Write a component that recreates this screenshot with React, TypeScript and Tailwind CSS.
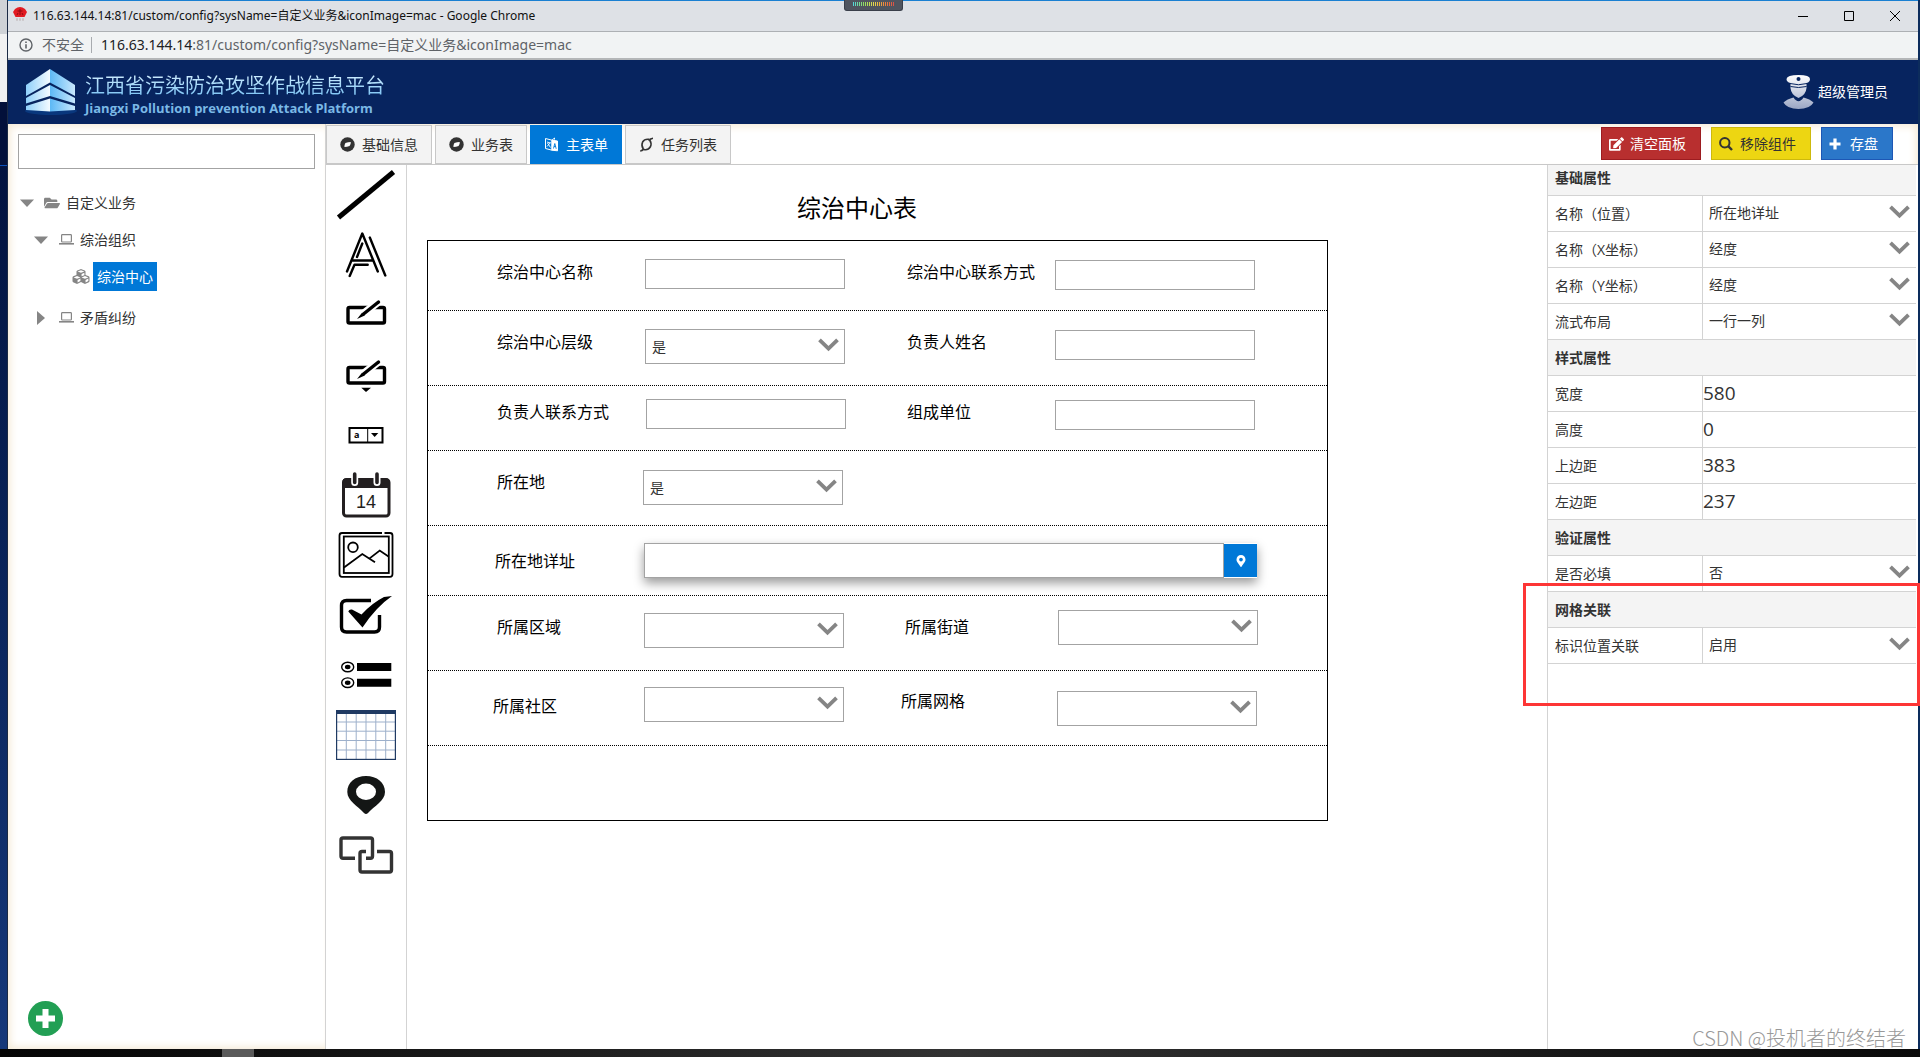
import React from 'react';
import { FaCubes, FaEdit, FaFolderOpen, FaMapMarkerAlt } from 'react-icons/fa';

type Field = {
  kind: 'input' | 'select' | 'location';
  id: string;
  label: string;
  labelX: number;
  labelY: number;
  x: number;
  y: number;
  value?: string;
};

// coordinates are relative to the design canvas
const fields: Field[] = [
  { kind: 'input', id: 'name', label: '综治中心名称', labelX: 90, labelY: 95, x: 238, y: 94 },
  { kind: 'input', id: 'contact', label: '综治中心联系方式', labelX: 500, labelY: 95, x: 648, y: 95 },
  { kind: 'select', id: 'level', label: '综治中心层级', labelX: 90, labelY: 165, x: 238, y: 164, value: '是' },
  { kind: 'input', id: 'leader', label: '负责人姓名', labelX: 500, labelY: 165, x: 648, y: 165 },
  { kind: 'input', id: 'leaderPhone', label: '负责人联系方式', labelX: 90, labelY: 235, x: 239, y: 234 },
  { kind: 'input', id: 'units', label: '组成单位', labelX: 500, labelY: 235, x: 648, y: 235 },
  { kind: 'select', id: 'place', label: '所在地', labelX: 90, labelY: 305, x: 236, y: 305, value: '是' },
  { kind: 'location', id: 'address', label: '所在地详址', labelX: 88, labelY: 384, x: 237, y: 378 },
  { kind: 'select', id: 'district', label: '所属区域', labelX: 90, labelY: 450, x: 237, y: 448, value: '' },
  { kind: 'select', id: 'street', label: '所属街道', labelX: 498, labelY: 450, x: 651, y: 445, value: '' },
  { kind: 'select', id: 'community', label: '所属社区', labelX: 86, labelY: 529, x: 237, y: 522, value: '' },
  { kind: 'select', id: 'gridArea', label: '所属网格', labelX: 494, labelY: 524, x: 650, y: 526, value: '' },
];

const sections = [
  {
    title: '基础属性',
    rows: [
      { id: 'p-name', label: '名称（位置）', value: '所在地详址', select: true },
      { id: 'p-x', label: '名称（X坐标）', value: '经度', select: true },
      { id: 'p-y', label: '名称（Y坐标）', value: '经度', select: true },
      { id: 'p-flow', label: '流式布局', value: '一行一列', select: true },
    ],
  },
  {
    title: '样式属性',
    rows: [
      { id: 'p-width', label: '宽度', value: '580', select: false },
      { id: 'p-height', label: '高度', value: '0', select: false },
      { id: 'p-top', label: '上边距', value: '383', select: false },
      { id: 'p-left', label: '左边距', value: '237', select: false },
    ],
  },
  {
    title: '验证属性',
    rows: [{ id: 'p-required', label: '是否必填', value: '否', select: true }],
  },
  {
    title: '网格关联',
    rows: [{ id: 'p-link', label: '标识位置关联', value: '启用', select: true }],
  },
];

const Chevron = () => (
  <svg className="pointer-events-none absolute right-[6px] top-[9px]" width="21" height="14" viewBox="0 0 21 14">
    <path d="M1.5 1.8 L10.5 10.6 L19.5 1.8" fill="none" stroke="#858585" strokeWidth="3.8" />
  </svg>
);

const ToolSvg = ({ children }: { children: React.ReactNode }) => (
  <svg width="60" height="60" viewBox="0 0 60 60" fill="none" stroke="#000">
    {children}
  </svg>
);

const PenBox = () => (
  <>
    <rect x="12" y="22.5" width="36.5" height="15.5" rx="1.5" strokeWidth="3.4" />
    <path d="M24 31.5 L44 15.5" stroke="#fff" strokeWidth="8" />
    <path d="M27.5 29 L42.5 17" strokeWidth="3.4" strokeLinecap="round" />
    <path d="M21 34 L26 27.8 L28.8 30.5 Z" fill="#000" stroke="none" />
  </>
);

const tools = [
  {
    name: '直线',
    icon: <ToolSvg><path d="M2.5 52.5 L57.5 7" strokeWidth="5" /></ToolSvg>,
  },
  {
    name: '文本',
    icon: (
      <ToolSvg>
        <path
          d="M11 46.5 L26.3 8.5 L41.8 46.5 M33.8 12.5 L49.3 50.5 M26.3 18.5 L21 32 M17 35.5 H37 M31.7 39.8 H18.5 L13.7 51"
          strokeWidth="2.4"
          strokeLinecap="round"
          strokeLinejoin="round"
        />
      </ToolSvg>
    ),
  },
  { name: '输入框', icon: <ToolSvg><PenBox /></ToolSvg> },
  {
    name: '下拉输入框',
    icon: (
      <ToolSvg>
        <PenBox />
        <path d="M25.3 42.7 H35 L30 47 Z" fill="#000" stroke="none" />
      </ToolSvg>
    ),
  },
  {
    name: '下拉框',
    icon: (
      <ToolSvg>
        <path d="M13.5 23 H46.5 V37.5 H13.5 Z" strokeWidth="2" />
        <path d="M31.7 23 V37.5" strokeWidth="1" />
        <path d="M35 28 H42.3 L38.7 32 Z" fill="#000" stroke="none" />
        <text x="18" y="33" fill="#000" stroke="none" fontSize="9" fontWeight="bold" fontFamily="Open Sans, sans-serif">a</text>
      </ToolSvg>
    ),
  },
  {
    name: '日期',
    icon: (
      <ToolSvg>
        <rect x="7.5" y="14.5" width="45.5" height="36.5" rx="3" stroke="#231f20" strokeWidth="3" />
        <path d="M7 22.5 V16 Q7 14 9 14 H51 Q53 14 53 16 V22.5 Z" fill="#231f20" stroke="#231f20" />
        <path d="M18.7 9 V17.5 M41 9 V17.5" stroke="#fff" strokeWidth="7" strokeLinecap="round" />
        <path d="M18.7 9 V17.5 M41 9 V17.5" stroke="#231f20" strokeWidth="3.6" strokeLinecap="round" />
        <text x="20" y="43" fill="#231f20" stroke="none" fontSize="18" fontFamily="Liberation Sans, sans-serif">14</text>
      </ToolSvg>
    ),
  },
  {
    name: '图片',
    icon: (
      <ToolSvg>
        <path d="M46 8 H6 Q3.5 8 3.5 10.5 V49 Q3.5 51.8 6 51.8 H54 Q56.5 51.8 56.5 49 V10.5 Q56.5 8 54 8 H48.5" strokeWidth="1.8" />
        <rect x="7.8" y="11.5" width="45" height="36.5" strokeWidth="1.8" />
        <circle cx="17" cy="22.3" r="4.8" strokeWidth="1.8" />
        <path d="M8 42.5 L26.3 29 L39 37.3 M33.3 33.6 L43.7 25.5 L52.5 31.5" strokeWidth="1.8" />
      </ToolSvg>
    ),
  },
  {
    name: '复选框',
    icon: (
      <ToolSvg>
        <path d="M35 15.5 H10.5 Q5.5 15.5 5.5 20.5 V42 Q5.5 47 10.5 47 H38.5 Q43.5 47 43.5 42 V30" strokeWidth="3.4" />
        <path d="M12.3 26.5 Q13 24 16 24.5 L25.5 29.5 Q36 18 48 12 L56 11 Q40 22 26.5 42.5 Z" fill="#000" stroke="none" />
      </ToolSvg>
    ),
  },
  {
    name: '单选框',
    icon: (
      <ToolSvg>
        <ellipse cx="11.7" cy="22" rx="6" ry="4.8" strokeWidth="1.4" />
        <ellipse cx="11.7" cy="37.7" rx="6" ry="4.8" strokeWidth="1.4" />
        <ellipse cx="11.7" cy="22" rx="2.8" ry="2.2" fill="#000" stroke="none" />
        <ellipse cx="11.7" cy="37.7" rx="2.8" ry="2.2" fill="#000" stroke="none" />
        <path d="M21 22 H55.3 M21 37.8 H55.3" strokeWidth="8" />
      </ToolSvg>
    ),
  },
  {
    name: '表格',
    icon: (
      <ToolSvg>
        <path d="M10.3 8 V54 M20.2 8 V54 M30 8 V54 M39.8 8 V54 M49.7 8 V54 M1 17 H59 M1 26.2 H59 M1 35.5 H59 M1 45 H59" stroke="#9db0cb" strokeWidth="1" />
        <rect x="0.6" y="5.6" width="58.8" height="48.8" stroke="#1f3a63" strokeWidth="1.2" />
        <path d="M0 7 H60" stroke="#1f3a63" strokeWidth="4" />
      </ToolSvg>
    ),
  },
  {
    name: '定位',
    icon: (
      <ToolSvg>
        <path
          d="M30 11 C41 11 49 17.5 49 27 C49 36 38 41 32 48 Q30 50 28 48 C22 41 11.3 36 11.3 27 C11.3 17.5 19 11 30 11 Z M30 18.5 A10 8.2 0 1 0 30 34.9 A10 8.2 0 1 0 30 18.5 Z"
          fill="#141615"
          fillRule="evenodd"
          stroke="none"
        />
      </ToolSvg>
    ),
  },
  {
    name: '关联',
    icon: (
      <ToolSvg>
        <path d="M19 33.3 H7 Q5 33.3 5 31.3 V15 Q5 13 7 13 H34.5 Q36.5 13 36.5 15 V31.3 Q36.5 33.3 34.5 33.3 H30" stroke="#333" strokeWidth="3.4" />
        <path d="M30 26.5 H26 Q24 26.5 24 28.5 V45 Q24 47 26 47 H53.5 Q55.5 47 55.5 45 V28.5 Q55.5 26.5 53.5 26.5 H41" stroke="#333" strokeWidth="3.4" />
      </ToolSvg>
    ),
  },
];

const CompassIcon = () => (
  <svg width="15" height="15" viewBox="0 0 15 15">
    <circle cx="7.5" cy="7.5" r="7.2" fill="#333" />
    <path d="M5.4 6 Q8 5 10.8 5 Q10.9 7.4 9.6 9 Q7 10 4.4 10 Q4.2 7.8 5.4 6 Z" fill="#fff" />
  </svg>
);

const FormIcon = () => (
  <svg width="15" height="15" viewBox="0 0 15 15" fill="none" stroke="#fff">
    <path d="M1.5 1.5 L8 3.2 V13.2 L1.5 11.5 Z M8 3.2 L10.5 1 V2.5" strokeWidth="1" />
    <path d="M8 3.2 L13.5 4 V13.8 L8 13.2 Z" fill="#fff" />
    <path d="M3 5 L6.5 6 M3 9.5 L6.5 5.5 M3.5 6 L6.5 10.5" strokeWidth="0.9" />
    <path d="M9.5 11.5 L10.8 6.5 L12.2 11.8 M10 9.5 H11.8" stroke="#0078d7" strokeWidth="0.9" />
  </svg>
);

const TaskIcon = () => (
  <svg width="15" height="15" viewBox="0 0 15 15" fill="none" stroke="#333" strokeWidth="1.6">
    <path d="M10.8 3.2 Q13 6.5 11.4 9.8 Q9 13.6 4.6 12.4 M4.2 11.8 Q2 8.4 3.6 5 Q5.6 1.6 10.4 2.4" />
    <path d="M1.2 14 Q3 14 5.2 11.6 M9.8 3.8 Q11.4 1.4 14 1.2" />
  </svg>
);

const tabs = [
  { name: '基础信息', icon: <CompassIcon /> },
  { name: '业务表', icon: <CompassIcon /> },
  { name: '主表单', icon: <FormIcon />, active: true },
  { name: '任务列表', icon: <TaskIcon /> },
];

const LaptopIcon = () => (
  <svg width="15" height="15" viewBox="0 0 15 15" fill="none" stroke="#858585">
    <rect x="2.6" y="2.6" width="9.8" height="7.4" rx="0.8" strokeWidth="1.2" />
    <path d="M0 11.8 H15" strokeWidth="1.6" />
  </svg>
);

const DownArrow = () => (
  <svg width="14" height="8" viewBox="0 0 14 8"><path d="M0 0.5 H14 L7 8 Z" fill="#858585" /></svg>
);

const RightArrow = () => (
  <svg width="14" height="14" viewBox="0 0 14 14"><path d="M3 0 L11 7 L3 14 Z" fill="#858585" /></svg>
);

const BrowserChrome = () => (
  <div className="font-['Noto_Sans','Noto_Sans_CJK_SC',sans-serif]">
    <div className="relative flex h-8 items-center border-b border-[#adb0b4] border-t border-t-[#1a80d2] bg-[#dee1e6] pl-1">
      <svg width="16" height="16" viewBox="0 0 16 16" className="mb-1">
        <path d="M3 3 Q8 -1 13 3 L15 6 L12.5 11 H3.5 L1 6 Z" fill="#e21b22" />
        <path d="M5.5 5 H10.5 M8 3 V9 M5 9 L6 7 M11 9 L10 7" stroke="#8c0d12" strokeWidth="1" />
        <path d="M4 13.5 H12" stroke="#c9c4c6" strokeWidth="2.5" strokeDasharray="2 1" />
      </svg>
      <span className="ml-[5px] text-xs text-[#111]">116.63.144.14:81/custom/config?sysName=自定义业务&amp;iconImage=mac - Google Chrome</span>
      <div className="ml-auto flex">
        <button aria-label="最小化" className="flex h-7 w-[46px] items-center justify-center">
          <svg width="10" height="10" viewBox="0 0 10 10"><path d="M0 5.5 H10" stroke="#000" /></svg>
        </button>
        <button aria-label="最大化" className="flex h-7 w-[46px] items-center justify-center">
          <svg width="10" height="10" viewBox="0 0 10 10"><path d="M0.5 0.5 H9.5 V9.5 H0.5 Z" stroke="#000" fill="none" /></svg>
        </button>
        <button aria-label="关闭" className="flex h-7 w-[46px] items-center justify-center">
          <svg width="10" height="10" viewBox="0 0 10 10"><path d="M0 0 L10 10 M10 0 L0 10" stroke="#000" /></svg>
        </button>
      </div>
      <div className="absolute left-[836px] top-[-1px] flex h-[11px] w-[59px] justify-center rounded-b-[3px] border border-t-0 border-[#3a3f4a] bg-[#50555f] pt-[2px]">
        <div className="h-1 w-[42px] bg-[repeating-linear-gradient(90deg,transparent_0_1px,#50555f_1px_2px),linear-gradient(90deg,#4fd8e0,#8fe060,#e8d84a,#f0863a,#d84a4a)]" />
      </div>
    </div>
    <div className="flex h-7 items-center border-b-2 border-[#b4b6b8] bg-[#f1f3f4] pl-[11px] text-sm text-[#5f6368]">
      <svg width="14" height="14" viewBox="0 0 14 14" fill="none" stroke="#5f6368">
        <circle cx="7" cy="7" r="6" strokeWidth="1.4" />
        <path d="M7 6.2 V10.4 M7 3.4 V5" strokeWidth="1.6" />
      </svg>
      <span className="ml-[9px]">不安全</span>
      <span className="ml-[7px] h-4 w-px bg-[#a8abaf]" />
      <span className="ml-[9px]"><span className="text-[#202124]">116.63.144.14</span>:81/custom/config?sysName=自定义业务&amp;iconImage=mac</span>
    </div>
  </div>
);

const Header = () => (
  <header className="flex h-16 items-center bg-[#07245f] pl-4 pr-[30px]">
    <svg width="54" height="54" viewBox="0 0 54 54">
      <defs>
        <linearGradient id="roofL" x1="0" x2="1">
          <stop offset="0" stopColor="#8fd0fb" />
          <stop offset="1" stopColor="#f4fbff" />
        </linearGradient>
        <linearGradient id="roofR" x1="0" x2="1">
          <stop offset="0" stopColor="#5cb8f5" />
          <stop offset="1" stopColor="#c9e8fd" />
        </linearGradient>
      </defs>
      <ellipse cx="27" cy="46" rx="26" ry="4" fill="#0b4591" opacity="0.6" />
      <path d="M2 20 L26 4 V17.5 L2 31 Z M2 33 L26 20 V31 L2 38.5 Z M2 41 L26 33.5 V46.5 L2 45 Z" fill="url(#roofL)" />
      <path d="M26 4 L51 20 V31 L26 17.5 Z M26 20 L51 33 V38.5 L26 31 Z M26 33.5 L51 41 V45 L26 46.5 Z" fill="url(#roofR)" />
    </svg>
    <div className="ml-[7px] pt-2">
      <h1 className="bg-gradient-to-b from-[#d2efff] to-[#74c0f4] bg-clip-text text-xl leading-6 text-transparent">江西省污染防治攻坚作战信息平台</h1>
      <p className="text-[13px] font-bold leading-5 text-[#7ab8e6]">Jiangxi Pollution prevention Attack Platform</p>
    </div>
    <div className="ml-auto flex items-center gap-1 text-sm text-white">
      <svg width="31" height="36" viewBox="0 0 31 36">
        <defs>
          <linearGradient id="officer" x1="0" x2="0" y1="0" y2="1">
            <stop offset="0" stopColor="#fff" />
            <stop offset="1" stopColor="#9aa6c4" />
          </linearGradient>
        </defs>
        <path d="M3.5 5 Q4 1 15.5 1 Q27 1 27 5 Q27 8 23.5 9 V14 Q23 21 15.5 24 Q8 21 7.5 14 V9 Q3.5 8 3.5 5 Z M0.5 28.5 Q4 25 10.5 23.5 Q15.5 31 20.5 23.5 Q27 25 30.5 28.5 Q27 35 15.5 35 Q4 35 0.5 28.5 Z" fill="url(#officer)" />
        <path d="M7 9.5 Q15.5 12 24 9.5 M7.5 12.5 Q15.5 14.5 23.5 12.5" fill="none" stroke="#07245f" strokeWidth="1" />
        <circle cx="15.5" cy="5" r="2" fill="#07245f" />
      </svg>
      <span>超级管理员</span>
    </div>
  </header>
);

const Sidebar = () => (
  <aside className="relative flex w-[318px] shrink-0 flex-col border-r border-[#d3d3d3] px-[10px] pt-[10px] text-sm shadow-[inset_8px_0_8px_-6px_#f5ead6,inset_0_8px_8px_-6px_#f5ead6,inset_0_-8px_8px_-6px_#f5ead6]">
    <input aria-label="搜索" type="text" className="h-[35px] w-full border border-[#a3a3a3] bg-white px-2 outline-none" />
    <ul className="mt-[15px] text-[#333]">
      <li className="flex h-[37px] items-center pl-[2px]">
        <DownArrow />
        <FaFolderOpen className="ml-[10px] h-4 w-4 text-[#858585]" />
        <span className="ml-[6px]">自定义业务</span>
      </li>
      <li className="flex h-[37px] items-center pl-4">
        <DownArrow />
        <span className="ml-[11px]"><LaptopIcon /></span>
        <span className="ml-[6px]">综治组织</span>
      </li>
      <li className="flex h-[37px] items-center pl-[54px]">
        <FaCubes className="h-[17px] w-[18px] text-[#858585]" />
        <span className="ml-[3px] flex h-[29px] items-center bg-[#0078d7] px-1 text-white">综治中心</span>
      </li>
      <li className="mt-1 flex h-[37px] items-center pl-4">
        <RightArrow />
        <span className="ml-[11px]"><LaptopIcon /></span>
        <span className="ml-[6px]">矛盾纠纷</span>
      </li>
    </ul>
    <button aria-label="新增" className="mb-[13px] ml-[10px] mt-auto flex h-[35px] w-[35px] items-center justify-center rounded-full bg-[#229f54]">
      <svg width="21" height="21" viewBox="0 0 21 21"><path d="M10.5 1 V20 M1 10.5 H20" stroke="#fff" strokeWidth="6" /></svg>
    </button>
  </aside>
);

const Toolbar = () => (
  <div className="flex h-[41px] items-start justify-between border-b border-[#c8c8c8] pr-[25px] text-sm shadow-[inset_0_8px_8px_-6px_#f5ead6,inset_-8px_0_8px_-6px_#f5ead6]">
    <div className="flex gap-[3px] pt-px">
      {tabs.map((tab) => (
        <button
          key={tab.name}
          className={`flex h-[39px] items-center gap-[7px] border px-[13px] ${
            tab.active ? 'border-[#0078d7] bg-[#0078d7] text-white' : 'border-[#c8c8c8] bg-[#f3f3f3] text-[#333]'
          }`}
        >
          {tab.icon}
          <span>{tab.name}</span>
        </button>
      ))}
    </div>
    <div className="flex gap-[10px] pt-[3px]">
      <button className="flex h-[33px] w-[100px] items-center gap-[6px] border border-[#9c1c20] bg-[#b82f2f] pl-[7px] text-white">
        <FaEdit className="h-[14px] w-[15px]" />
        <span>清空面板</span>
      </button>
      <button className="flex h-[33px] w-[100px] items-center gap-[7px] border border-[#cdb90d] bg-[#edd612] pl-[7px] text-[#333]">
        <svg width="14" height="14" viewBox="0 0 14 14" fill="none" stroke="#333">
          <circle cx="5.8" cy="5.8" r="4.7" strokeWidth="2" />
          <path d="M9.2 9.2 L13 13" strokeWidth="2.4" />
        </svg>
        <span>移除组件</span>
      </button>
      <button className="flex h-[33px] w-[72px] items-center gap-[9px] border border-[#1d57b5] bg-[#2b77c9] pl-[7px] text-white">
        <svg width="12" height="12" viewBox="0 0 12 12"><path d="M6 0.5 V11.5 M0.5 6 H11.5" stroke="#fff" strokeWidth="3.2" /></svg>
        <span>存盘</span>
      </button>
    </div>
  </div>
);

const FieldControl = ({ field }: { field: Field }) => {
  if (field.kind === 'input') {
    return <input id={field.id} type="text" className="block h-[30px] w-[200px] border border-[#a3a3a3] bg-white px-2 text-sm outline-none" />;
  }
  if (field.kind === 'select') {
    return (
      <div className="relative">
        <select id={field.id} defaultValue={field.value} className="block h-[35px] w-[200px] appearance-none border border-[#a3a3a3] bg-white pl-[6px] text-sm text-[#333] outline-none">
          <option>{field.value}</option>
        </select>
        <Chevron />
      </div>
    );
  }
  return (
    <div className="flex items-center bg-white shadow-[0_5px_10px_rgba(0,0,0,0.4)]">
      <input id={field.id} type="text" className="block h-[35px] w-[580px] border border-[#a3a3a3] bg-white px-2 text-sm outline-none" />
      <button aria-label="选择位置" className="flex h-[33px] w-[33px] items-center justify-center bg-[#0078d7] text-white">
        <FaMapMarkerAlt className="h-3 w-3" />
      </button>
    </div>
  );
};

const Canvas = () => (
  <main className="relative min-w-0 flex-1 text-black">
    <h2 className="ml-5 w-[860px] pt-[27px] text-center text-2xl leading-8">综治中心表</h2>
    <div className="ml-5 mt-4 w-[901px] border border-black">
      <div className="h-[70px] border-b border-dotted border-black" />
      <div className="h-[75px] border-b border-dotted border-black" />
      <div className="h-[65px] border-b border-dotted border-black" />
      <div className="h-[75px] border-b border-dotted border-black" />
      <div className="h-[70px] border-b border-dotted border-black" />
      <div className="h-[75px] border-b border-dotted border-black" />
      <div className="h-[75px] border-b border-dotted border-black" />
      <div className="h-[74px]" />
    </div>
    {fields.map((field) => (
      <React.Fragment key={field.id}>
        <label htmlFor={field.id} className="absolute text-base leading-6" style={{ left: field.labelX, top: field.labelY }}>
          {field.label}
        </label>
        <div className="absolute" style={{ left: field.x, top: field.y }}>
          <FieldControl field={field} />
        </div>
      </React.Fragment>
    ))}
  </main>
);

const Properties = () => (
  <section className="mr-[2px] w-[369px] shrink-0 overflow-hidden border-l border-[#d3d3d3] text-sm text-[#333]">
    <div className="-mt-[5px]">
      {sections.map((section) => (
        <div key={section.title}>
          <h3 className="flex h-9 items-center border-b border-[#d3d3d3] bg-[#f4f4f4] pl-[7px] font-bold">{section.title}</h3>
          {section.rows.map((row) => (
            <div key={row.id} className="flex h-9 border-b border-[#d3d3d3]">
              <label htmlFor={row.id} className="flex w-[155px] shrink-0 items-center border-r border-[#d3d3d3] pl-[7px]">{row.label}</label>
              <div className="relative flex-1">
                {row.select ? (
                  <>
                    <select id={row.id} className="h-[34px] w-full appearance-none bg-white pl-[6px] outline-none">
                      <option>{row.value}</option>
                    </select>
                    <Chevron />
                  </>
                ) : (
                  <input id={row.id} type="text" defaultValue={row.value} className="h-[34px] w-full bg-white text-[19px] outline-none" />
                )}
              </div>
            </div>
          ))}
        </div>
      ))}
    </div>
  </section>
);

export default function App() {
  return (
    <div className="relative flex min-h-screen flex-col overflow-hidden bg-[#06122f] font-['Open_Sans','Noto_Sans_CJK_SC',sans-serif]">
      <div className="flex flex-1">
        <div className="flex w-2 shrink-0 flex-col border-r border-[#1b2a44]">
          <div className="h-[34px] bg-[#cfd2d6]" />
          <div className="h-[68px] bg-[#f1f1f1]" />
          <div className="h-16 border-b border-[#0b4fb8] bg-[#03103a]" />
          <div className="flex-1 bg-gradient-to-b from-[#03133f] to-[#16387a]" />
        </div>
        <div className="flex min-w-0 flex-1 flex-col bg-white">
          <BrowserChrome />
          <Header />
          <div className="flex flex-1">
            <Sidebar />
            <div className="flex min-w-0 flex-1 flex-col">
              <Toolbar />
              <div className="flex flex-1">
                <nav className="flex w-[81px] shrink-0 flex-col items-center border-r border-[#d3d3d3]">
                  {tools.map((tool) => (
                    <button key={tool.name} aria-label={tool.name}>{tool.icon}</button>
                  ))}
                </nav>
                <Canvas />
                <Properties />
              </div>
            </div>
          </div>
        </div>
        <div className="w-[2px] shrink-0 bg-[#0c2c5c]" />
      </div>
      <div className="flex h-2 bg-gradient-to-r from-[#050505] via-[#333] to-[#0a0a0a]">
        <div className="ml-[222px] w-8 bg-[#5a5a5a]" />
      </div>

      <div className="pointer-events-none absolute right-0 top-[583px] h-[123px] w-[397px] border-[3px] border-[#fd3535]" />
      <div className="pointer-events-none absolute bottom-1 right-[14px] font-['Noto_Sans_CJK_SC',sans-serif] text-xl leading-[30px] font-light text-[#999]">CSDN @投机者的终结者</div>
    </div>
  );
}
